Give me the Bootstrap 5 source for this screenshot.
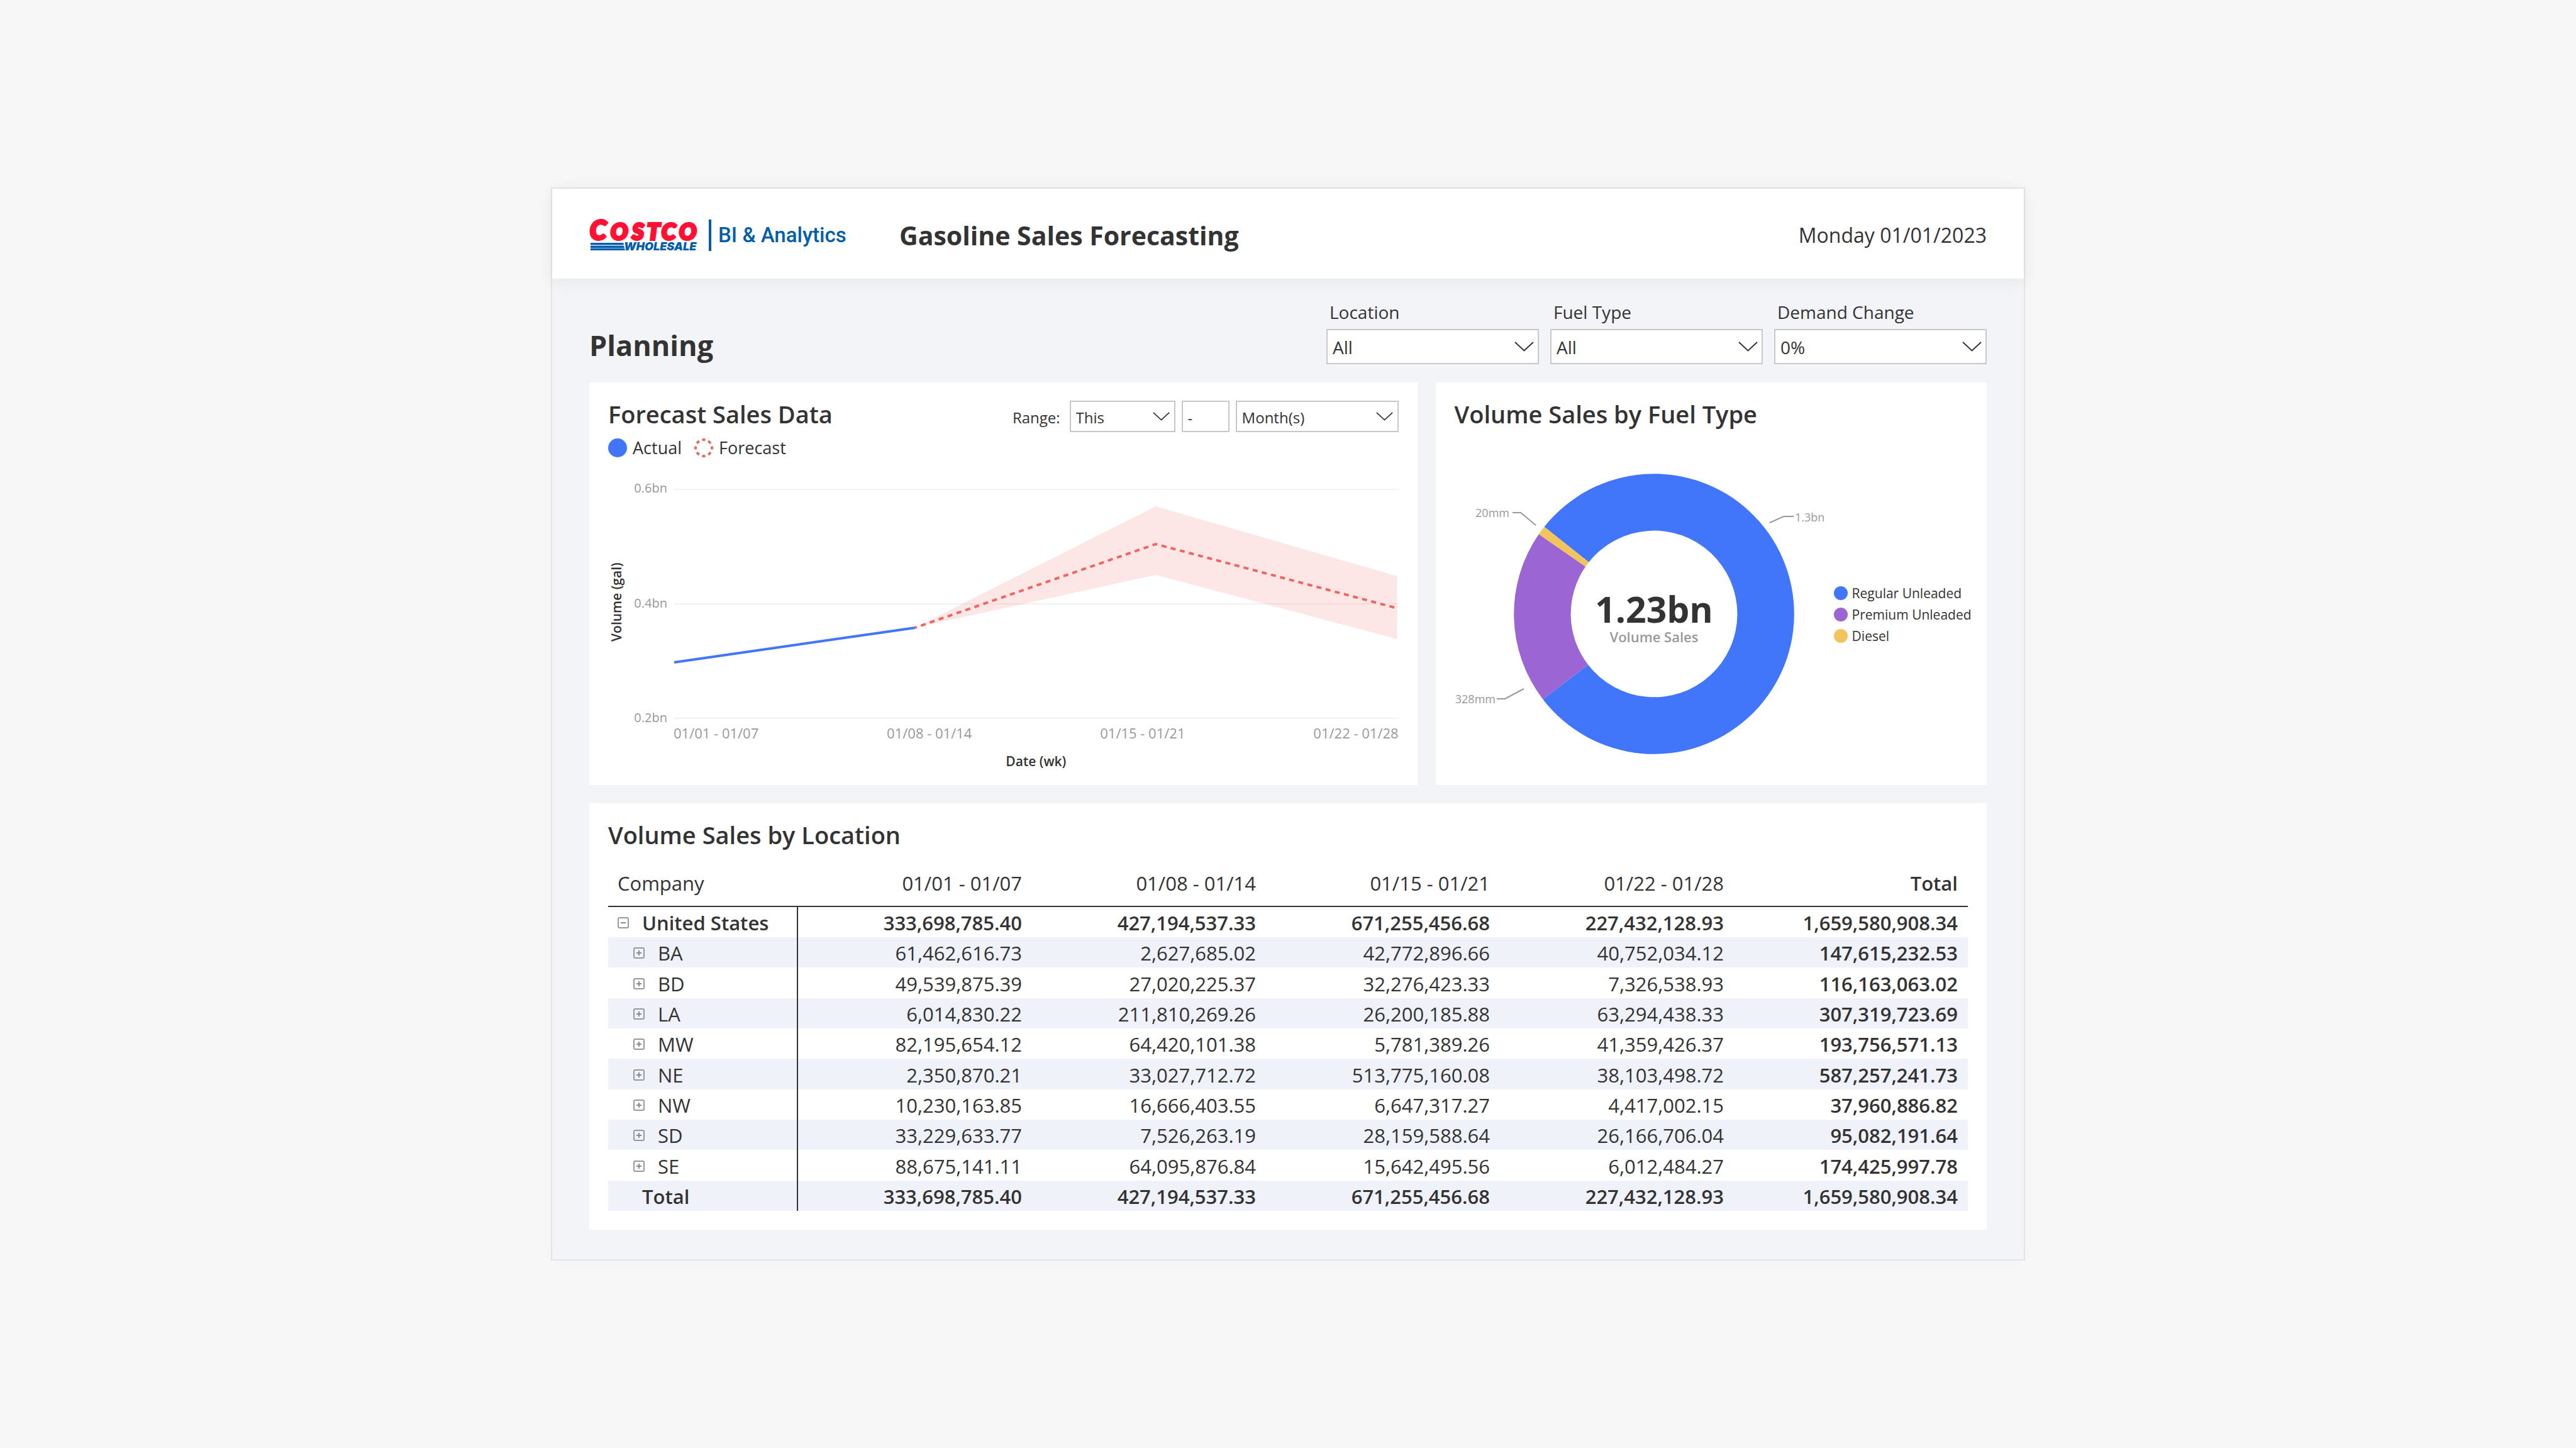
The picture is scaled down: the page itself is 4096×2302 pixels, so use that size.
<!DOCTYPE html>
<html lang="en">
<head>
<meta charset="utf-8">
<meta name="viewport" content="width=device-width, initial-scale=1">
<title>Gasoline Sales Forecasting</title>
<link href="https://cdn.jsdelivr.net/npm/bootstrap@5.3.0/dist/css/bootstrap.min.css" rel="stylesheet">
<style>
  :root {
    --ink: #333333;
    --muted-ink: #999999;
    --line: #c8c8c8;
    --brand-blue: #005dab;
  }
  body {
    background: #f7f7f7;
    color: var(--ink);
    font-family: "Open Sans", "Noto Sans", sans-serif;
    font-size: 28px;
    line-height: 36px;
  }
  .report {
    width: 100%;
    max-width: 2344px;
    background: #f3f4f8;
    border: 2px solid #e4e4e4;
    box-shadow: 0 0 24px rgba(0, 0, 0, .02);
  }
  .report-head {
    min-height: 144px;
    padding: 4px 59px 0;
    background: #fff;
    border-bottom: 1px solid #ececec;
    box-shadow: 0 4px 24px rgba(0, 0, 0, .06);
  }
  .brand { width: 493px; padding-left: 1px; color: var(--brand-blue); text-decoration: none; }
  .brand-mark { width: 193px; height: 50px; overflow: visible; }
  .brand-name { margin-left: 11px; font-family: Roboto, sans-serif; font-size: 33px; font-weight: 500; line-height: 50px; }
  .report-title { font-size: 41px; font-weight: 700; line-height: 56px; }
  .report-date { font-size: 32px; line-height: 44px; }
  .report-body { padding: 34px 59px 47px; }
  .section-title { font-size: 45px; font-weight: 700; line-height: 60px; }

  .filters { gap: 18px; }
  .filter { width: 338px; }
  .filter label { margin-bottom: 9px; padding-left: 5px; }
  .field {
    height: 56px;
    padding: 2px 48px 0 8px;
    border: 2px solid var(--line);
    border-radius: 0;
    background-color: #fff;
    color: var(--ink);
    font-size: 28px;
    line-height: 36px;
  }
  .form-select.field {
    background-image: url("data:image/svg+xml,%3Csvg xmlns='http://www.w3.org/2000/svg' viewBox='0 0 31 16'%3E%3Cpath d='M1 1l14.5 13.500L30 1' fill='none' stroke='%23333' stroke-width='2'/%3E%3C/svg%3E");
    background-position: right 6px center;
    background-size: 31px 16px;
  }
  .field.field-sm { height: 50px; font-size: 24px; padding-top: 4px; }
  .form-select.field-sm { background-position: right 7px center; background-size: 27px 14px; }
  .range { gap: 10px; font-size: 24px; margin-top: 4px; }
  .range label { margin-right: 5px; padding-top: 4px; }
  .range-mode { width: 168px; }
  .field.range-count { width: 76px; padding-right: 8px; }
  .range-unit { width: 259px; }

  .panels { gap: 29px; margin: 29px 0; }
  .panel { background: #fff; padding: 25px 30px 30px; min-width: 0; }
  .panel-line { flex: 1256 1 0; height: 640px; }
  .panel-donut { flex: 816 1 0; height: 640px; }
  .panel-title { font-size: 38px; font-weight: 600; line-height: 50px; }

  .key { gap: 10px; font-size: 27px; margin-top: 7px; }
  .key svg { width: 30px; height: 30px; }
  .key-item { gap: 9px; margin-right: 10px; }

  .plot { margin-top: 32px; font-size: 22px; line-height: 28px; color: var(--muted-ink); }
  .y-title { width: 26px; height: 390px; writing-mode: vertical-rl; transform: rotate(180deg); text-align: center; font-size: 21px; line-height: 26px; font-weight: 600; color: var(--ink); }
  .y-ticks { width: 68px; height: 393px; font-size: 20px; text-align: right; }
  .plot-area { margin: 13px 0 0 10px; }
  .x-ticks { margin-top: 8px; }
  .x-title { font-size: 21px; font-weight: 600; color: var(--ink); margin-top: 17px; text-align: center; }

  .donut-row { margin-top: 62px; }
  .donut { width: 595px; height: 460px; overflow: visible; }
  .donut-key { font-size: 21px; line-height: 28px; gap: 6px; margin-top: 4px; white-space: nowrap; }
  .swatch { width: 22px; height: 22px; border-radius: 50%; margin-right: 7px; }

  .sales { table-layout: fixed; width: 100%; margin: 19px 0 0; border-collapse: separate; border-spacing: 0; font-size: 31px; line-height: 42px; color: var(--ink); }
  .sales th, .sales td { padding: 4px 16px 2px; border: 0; background: transparent; color: inherit; font-weight: 400; text-align: right; }
  .sales thead th { padding: 12px 16px 15px; border-bottom: 2px solid #333; }
  .sales th:first-child { width: 302px; text-align: left; padding-right: 0; padding-left: 15px; }
  .sales tbody th { border-right: 2px solid #333; }
  .sales tbody tr { height: 48px; }
  .sales tbody tr:nth-child(3n) { height: 49px; }
  .sales tbody tr:nth-child(even) { background: #f0f2fa; }
  .sales .strong th, .sales .strong td, .sales tr > :last-child { font-weight: 600; }
  .leaf-row { padding-left: 25px; }
  .total-row { padding-left: 39px; }
  .toggle { border: 0; padding: 0; background: none; width: 18px; height: 18px; margin-right: 21px; }
  .toggle svg { display: block; width: 18px; height: 18px; }
</style>
</head>
<body>
<div class="min-vh-100 d-flex align-items-center justify-content-center">
<main class="report">
  <header class="report-head d-flex align-items-center position-relative">
    <a href="#" class="brand d-flex align-items-center flex-shrink-0">
      <svg class="brand-mark" viewBox="0 0 193 50" role="img" aria-label="Costco Wholesale">
        <path d="M1 37h52l2 12H1z" fill="#9dbfe0"/>
        <path d="M1 37h52l1 3H1zM1 42h53l1 3H1zM1 46h54l1 3H1z" fill="#005dab"/>
        <path d="M189 0h4v50h-4z" fill="#005dab"/>
        <g fill="#ff1035" stroke="#ff1035" stroke-width="4" font-family="Lato, sans-serif" font-weight="900" font-style="italic">
          <text y="32" font-size="42" x="0">C</text>
          <text y="32" font-size="36" x="33 67 91 114 142">OSTCO</text>
        </g>
        <text fill="#005dab" font-family="Inter, sans-serif" font-weight="900" font-style="italic" y="49" font-size="18" x="54">WHOLESALE</text>
      </svg>
      <span class="brand-name">BI &amp; Analytics</span>
    </a>
    <h1 class="report-title mb-0">Gasoline Sales Forecasting</h1>
    <time class="report-date ms-auto" datetime="2023-01-01">Monday 01/01/2023</time>
  </header>

  <div class="report-body">
    <div class="d-flex justify-content-between align-items-end">
      <h2 class="section-title mb-0">Planning</h2>
      <form class="filters d-flex">
        <div class="filter">
          <label class="d-block" for="location">Location</label>
          <select class="form-select field" id="location"><option>All</option></select>
        </div>
        <div class="filter">
          <label class="d-block" for="fuel">Fuel Type</label>
          <select class="form-select field" id="fuel"><option>All</option></select>
        </div>
        <div class="filter">
          <label class="d-block" for="demand">Demand Change</label>
          <select class="form-select field" id="demand"><option>0%</option></select>
        </div>
      </form>
    </div>

    <div class="panels d-flex">
      <section class="panel panel-line">
        <div class="d-flex justify-content-between align-items-start">
          <h3 class="panel-title mb-0">Forecast Sales Data</h3>
          <form class="range d-flex align-items-center">
            <label for="range-mode">Range:</label>
            <select class="form-select field field-sm range-mode" id="range-mode"><option>This</option></select>
            <input class="form-control field field-sm range-count" type="text" value="-" aria-label="Count">
            <select class="form-select field field-sm range-unit" aria-label="Unit"><option>Month(s)</option></select>
          </form>
        </div>
        <div class="key d-flex">
          <div class="key-item d-flex align-items-center">
            <svg viewBox="0 0 30 30" aria-hidden="true"><circle cx="15" cy="15" r="15" fill="#4175fa"/></svg>Actual
          </div>
          <div class="key-item d-flex align-items-center">
            <svg viewBox="0 0 30 30" aria-hidden="true"><circle cx="15" cy="15" r="13" fill="none" stroke="#ed6661" stroke-width="4" pathLength="80" stroke-dasharray="5 5" stroke-dashoffset="2.5"/></svg>Forecast
          </div>
        </div>
        <div class="plot d-flex">
          <div class="y-title">Volume (gal)</div>
          <div class="y-ticks d-flex flex-column justify-content-between"><span>0.6bn</span><span>0.4bn</span><span>0.2bn</span></div>
          <div class="plot-area flex-grow-1">
            <svg class="d-block w-100" viewBox="0 0 1153 368" role="img" aria-label="Actual and forecast volume by week">
              <path d="M0 3h1153M0 185h1153M0 367h1153" stroke="#f2f2f2" stroke-width="2"/>
              <path d="M384 223L767 30L1151 141V241L767 139z" fill="#ed6661" fill-opacity=".16"/>
              <path d="M1 278L384 223" stroke="#4175fa" stroke-width="4"/>
              <path d="M384 223L767 90L1151 192" fill="none" stroke="#ed6661" stroke-width="4" stroke-dasharray="8 7" stroke-dashoffset="5"/>
            </svg>
            <div class="x-ticks d-flex justify-content-between"><span>01/01 - 01/07</span><span>01/08 - 01/14</span><span>01/15 - 01/21</span><span>01/22 - 01/28</span></div>
            <div class="x-title">Date (wk)</div>
          </div>
        </div>
      </section>

      <section class="panel panel-donut">
        <h3 class="panel-title mb-0">Volume Sales by Fuel Type</h3>
        <div class="donut-row d-flex align-items-center">
          <svg class="donut flex-shrink-0" viewBox="0 0 595 460" role="img" aria-label="Volume sales by fuel type">
            <g transform="translate(317 231)">
              <path fill="#4175fa" d="M-174.500 -138.500A222.800 222.800 0 1 1 -176.700 135.700L-104.900 80.700A132.400 132.400 0 1 0 -103.700 -82.300z"/>
              <path fill="#9b66d3" d="M-176.700 135.700A222.800 222.800 0 0 1 -183.200 -126.800L-108.900 -75.300A132.400 132.400 0 0 0 -104.900 80.700z"/>
              <path fill="#f2c45c" d="M-183.200 -126.800A222.800 222.800 0 0 1 -174.500 -138.500L-103.700 -82.300A132.400 132.400 0 0 0 -108.900 -75.300z"/>
            </g>
            <path d="M92 70h13l24 20M501 86l22-10h16M67 366h13l30-16" fill="none" stroke="#999" stroke-width="2"/>
            <g font-size="18" fill="#999">
              <text x="87" y="77" text-anchor="end">20mm</text>
              <text x="541" y="84">1.3bn</text>
              <text x="65" y="373" text-anchor="end">328mm</text>
            </g>
            <text x="317" y="245" text-anchor="middle" font-size="57" font-weight="700" fill="#333">1.23bn</text>
            <text x="317" y="276" text-anchor="middle" font-size="22" font-weight="600" fill="#999">Volume Sales</text>
          </svg>
          <ul class="donut-key list-unstyled d-flex flex-column mb-0 ms-2">
            <li class="d-flex align-items-center"><span class="swatch" style="background:#4175fa"></span>Regular Unleaded</li>
            <li class="d-flex align-items-center"><span class="swatch" style="background:#9b66d3"></span>Premium Unleaded</li>
            <li class="d-flex align-items-center"><span class="swatch" style="background:#f2c45c"></span>Diesel</li>
          </ul>
        </div>
      </section>
    </div>

    <section class="panel">
      <h3 class="panel-title mb-0">Volume Sales by Location</h3>
      <svg class="d-none" aria-hidden="true">
        <symbol id="plus" viewBox="0 0 18 18"><rect x="1" y="1" width="16" height="16" rx="2" fill="none" stroke="#999" stroke-width="2"/><path d="M5 9h8M9 5v8" stroke="#8a8a8a" stroke-width="2"/></symbol>
        <symbol id="minus" viewBox="0 0 18 18"><rect x="1" y="1" width="16" height="16" rx="2" fill="none" stroke="#999" stroke-width="2"/><path d="M5 9h8" stroke="#8a8a8a" stroke-width="2"/></symbol>
      </svg>
      <table class="sales">
        <thead>
          <tr><th scope="col">Company</th><th scope="col">01/01 - 01/07</th><th scope="col">01/08 - 01/14</th><th scope="col">01/15 - 01/21</th><th scope="col">01/22 - 01/28</th><th scope="col">Total</th></tr>
        </thead>
        <tbody>
          <tr class="strong"><th scope="row"><div class="d-flex align-items-center"><button class="toggle" type="button" aria-label="Collapse United States"><svg><use href="#minus"/></svg></button>United States</div></th><td>333,698,785.40</td><td>427,194,537.33</td><td>671,255,456.68</td><td>227,432,128.93</td><td>1,659,580,908.34</td></tr>
          <tr><th scope="row"><div class="leaf-row d-flex align-items-center"><button class="toggle" type="button" aria-label="Expand BA"><svg><use href="#plus"/></svg></button>BA</div></th><td>61,462,616.73</td><td>2,627,685.02</td><td>42,772,896.66</td><td>40,752,034.12</td><td>147,615,232.53</td></tr>
          <tr><th scope="row"><div class="leaf-row d-flex align-items-center"><button class="toggle" type="button" aria-label="Expand BD"><svg><use href="#plus"/></svg></button>BD</div></th><td>49,539,875.39</td><td>27,020,225.37</td><td>32,276,423.33</td><td>7,326,538.93</td><td>116,163,063.02</td></tr>
          <tr><th scope="row"><div class="leaf-row d-flex align-items-center"><button class="toggle" type="button" aria-label="Expand LA"><svg><use href="#plus"/></svg></button>LA</div></th><td>6,014,830.22</td><td>211,810,269.26</td><td>26,200,185.88</td><td>63,294,438.33</td><td>307,319,723.69</td></tr>
          <tr><th scope="row"><div class="leaf-row d-flex align-items-center"><button class="toggle" type="button" aria-label="Expand MW"><svg><use href="#plus"/></svg></button>MW</div></th><td>82,195,654.12</td><td>64,420,101.38</td><td>5,781,389.26</td><td>41,359,426.37</td><td>193,756,571.13</td></tr>
          <tr><th scope="row"><div class="leaf-row d-flex align-items-center"><button class="toggle" type="button" aria-label="Expand NE"><svg><use href="#plus"/></svg></button>NE</div></th><td>2,350,870.21</td><td>33,027,712.72</td><td>513,775,160.08</td><td>38,103,498.72</td><td>587,257,241.73</td></tr>
          <tr><th scope="row"><div class="leaf-row d-flex align-items-center"><button class="toggle" type="button" aria-label="Expand NW"><svg><use href="#plus"/></svg></button>NW</div></th><td>10,230,163.85</td><td>16,666,403.55</td><td>6,647,317.27</td><td>4,417,002.15</td><td>37,960,886.82</td></tr>
          <tr><th scope="row"><div class="leaf-row d-flex align-items-center"><button class="toggle" type="button" aria-label="Expand SD"><svg><use href="#plus"/></svg></button>SD</div></th><td>33,229,633.77</td><td>7,526,263.19</td><td>28,159,588.64</td><td>26,166,706.04</td><td>95,082,191.64</td></tr>
          <tr><th scope="row"><div class="leaf-row d-flex align-items-center"><button class="toggle" type="button" aria-label="Expand SE"><svg><use href="#plus"/></svg></button>SE</div></th><td>88,675,141.11</td><td>64,095,876.84</td><td>15,642,495.56</td><td>6,012,484.27</td><td>174,425,997.78</td></tr>
          <tr class="strong"><th scope="row"><div class="total-row">Total</div></th><td>333,698,785.40</td><td>427,194,537.33</td><td>671,255,456.68</td><td>227,432,128.93</td><td>1,659,580,908.34</td></tr>
        </tbody>
      </table>
    </section>
  </div>
</main>
</div>
<script src="https://cdn.jsdelivr.net/npm/bootstrap@5.3.0/dist/js/bootstrap.bundle.min.js"></script>
</body>
</html>
